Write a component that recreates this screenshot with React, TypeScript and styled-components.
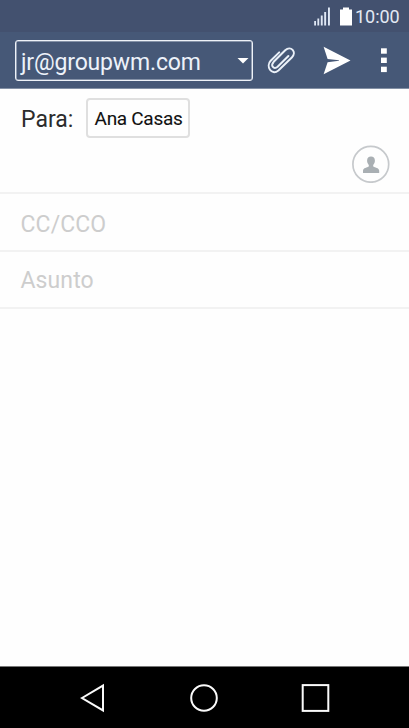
import React from 'react';
import styled, { createGlobalStyle } from 'styled-components';

const GlobalStyle = createGlobalStyle`
  * { box-sizing: border-box; }
  body { margin: 0; background: #fff; font-family: Roboto, sans-serif; }
`;

const Screen = styled.div`
  width: 409px;
  height: 728px;
  display: flex;
  flex-direction: column;
  overflow: hidden;
  background: #fefefe;
`;

const StatusBar = styled.header`
  flex: 0 0 32px;
  display: flex;
  align-items: center;
  justify-content: flex-end;
  padding: 1px 9px 0 0;
  background: #43516f;
`;

const Signal = styled.svg`
  width: 17px;
  height: 19px;
  margin-right: 9px;
`;

const Battery = styled.svg`
  width: 12px;
  height: 19px;
  margin-right: 3px;
`;

const Clock = styled.time`
  width: 45px;
  font-size: 18px;
  line-height: 22px;
  letter-spacing: -0.05px;
  white-space: nowrap;
  color: #e3e9f4;
`;

const Toolbar = styled.div`
  flex: 0 0 57px;
  display: flex;
  align-items: flex-start;
  padding: 8px 0 0 15px;
  background: #465877;
  border-bottom: 1px solid #8390a5;
`;

const AccountSelect = styled.button`
  width: 238px;
  height: 41px;
  display: flex;
  align-items: center;
  justify-content: space-between;
  padding: 5px 3px 0 5px;
  border: 1px solid #eef2f8;
  box-shadow: inset 0 0 0 0.6px #c3cbd9;
  border-radius: 3px;
  background: transparent;
  color: #edf2fa;
  font-family: inherit;
  font-size: 23px;
  line-height: 28px;
  letter-spacing: -0.16px;
`;

const Caret = styled.svg`
  width: 12px;
  height: 6px;
  margin-top: -5px;
`;

const ToolIcon = styled.svg<{ $width: number; $gap: number }>`
  width: ${p => p.$width}px;
  height: 40px;
  margin-left: ${p => p.$gap}px;
`;

const Recipients = styled.section`
  flex: 0 0 105px;
  display: flex;
  flex-direction: column;
  padding: 9px 19px 0 21px;
  border-bottom: 2px solid #f2f2f2;
`;

const RecipientRow = styled.div`
  display: flex;
  align-items: center;
  height: 40px;
`;

const Label = styled.span`
  width: 65px;
  padding-top: 4px;
  font-size: 23px;
  line-height: 28px;
  color: #2c2c2c;
`;

const Chip = styled.span`
  width: 104px;
  height: 40px;
  display: flex;
  align-items: center;
  justify-content: center;
  border: 2px solid #dfdfdf;
  border-radius: 4px;
  padding: 1px 0 0 1px;
  font-size: 19px;
  letter-spacing: -0.3px;
  -webkit-text-stroke: 0.1px #111;
  color: #111;
  white-space: nowrap;
`;

const ContactButton = styled.svg`
  width: 38px;
  height: 38px;
  align-self: flex-end;
  margin-top: 7px;
`;

const Field = styled.div<{ $height: number; $top: number }>`
  flex: 0 0 ${p => p.$height}px;
  display: flex;
  align-items: center;
  padding: ${p => p.$top}px 0 0 20.5px;
  border-bottom: 2px solid #f2f2f2;
  font-size: 23px;
  letter-spacing: 0.1px;
  color: #cdcdcd;
`;

const MessageBody = styled.main`
  flex: 1;
`;

const NavBar = styled.nav`
  flex: 0 0 62px;
  display: flex;
  align-items: center;
  gap: 83px;
  padding-left: 79px;
  background: #000;
  border-top: 1px solid #777;
`;

const NavIcon = styled.svg`
  width: 28px;
  height: 30px;
  overflow: visible;
  fill: none;
  stroke: #fafafa;
  stroke-width: 2;
`;

export default function App() {
  return (
    <Screen>
      <GlobalStyle />
      <StatusBar>
        <Signal viewBox="0 0 17 19" fill="#dfe7f4">
          <rect x="0.2" y="14" width="1.8" height="4.5" />
          <rect x="3.4" y="11.5" width="1.8" height="7" />
          <rect x="6.8" y="8.5" width="1.9" height="10" />
          <rect x="10.2" y="5" width="1.9" height="13.5" />
          <rect x="14" y="0.5" width="1.9" height="18" />
        </Signal>
        <Battery viewBox="0 0 12 19">
          <path d="M0 2.5h3V0.5h6v2h3v16H0z" fill="#fff" />
        </Battery>
        <Clock>10:00</Clock>
      </StatusBar>
      <Toolbar>
        <AccountSelect>
          <span>jr@groupwm.com</span>
          <Caret viewBox="0 0 12 6"><path d="M0.5 0h11L6 5.5z" fill="#fff" /></Caret>
        </AccountSelect>
        <ToolIcon $width={30} $gap={14} viewBox="0 0 30 40">
          <path
            d="M12.2 12.4 L3.7 20.8 C-1.5 26.2 4.4 36.2 11.4 30.4 L24.8 17.5 C30.3 11.7 23.7 5.3 18.2 10.2 L6.7 21.8 C3.2 25.8 6.8 30 10.6 26.7 L21.4 16"
            fill="none" stroke="#eaf0f8" strokeWidth="2" strokeLinecap="round"
          />
        </ToolIcon>
        <ToolIcon $width={30} $gap={26} viewBox="0 0 30 40">
          <path d="M0.6 6.8 L27.5 20.4 L0.6 34.2 L4.6 22.2 L16 20.8 L16 20.2 L4.6 18.9z" fill="#fff" />
        </ToolIcon>
        <ToolIcon $width={10} $gap={27} viewBox="0 0 10 40" fill="#fff">
          <rect x="1" y="8.3" width="5.8" height="5.4" />
          <rect x="1" y="17.6" width="5.8" height="5.4" />
          <rect x="1" y="26.7" width="5.8" height="5.4" />
        </ToolIcon>
      </Toolbar>
      <Recipients>
        <RecipientRow>
          <Label>Para:</Label>
          <Chip>Ana Casas</Chip>
        </RecipientRow>
        <ContactButton viewBox="0 0 38 38">
          <circle cx="18.8" cy="19.3" r="17.9" fill="none" stroke="#c6c9cc" strokeWidth="1.7" />
          <path
            d="M19 11.5c2.4 0 3.9 1.5 3.9 4.1 0 2-.7 3.4-1.7 4.5v1.5c1.6 1 5.9 1.3 6 4.2V28H11v-2.2c.1-2.9 4.3-3.2 5.8-4.2v-1.5c-1-1.1-1.7-2.5-1.7-4.5 0-2.6 1.5-4.1 3.9-4.1z"
            fill="#a9afb3"
          />
        </ContactButton>
      </Recipients>
      <Field $height={58} $top={5}>CC/CCO</Field>
      <Field $height={57} $top={2}>Asunto</Field>
      <MessageBody />
      <NavBar>
        <NavIcon viewBox="0 0 28 30"><path d="M3 15 L24 2.6 V27.4z" /></NavIcon>
        <NavIcon viewBox="0 0 28 30"><circle cx="14" cy="15" r="12.8" /></NavIcon>
        <NavIcon viewBox="0 0 28 30"><rect x="1.7" y="2.1" width="25.6" height="25.8" /></NavIcon>
      </NavBar>
    </Screen>
  );
}
